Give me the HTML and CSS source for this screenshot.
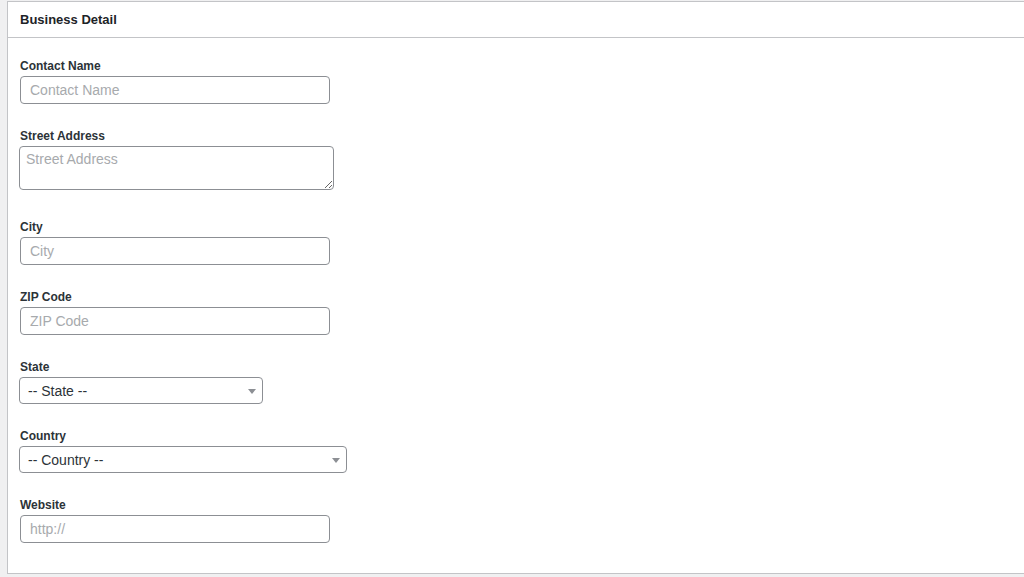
FILE: index.html
```html
<!DOCTYPE html>
<html lang="en">
<head>
    <meta charset="UTF-8">
    <meta name="viewport" content="width=device-width, initial-scale=1.0">
    <title>Business Detail</title>
    <link rel="stylesheet" href="styles.css">
</head>
<body>
    <div class="panel">
        <div class="panel-head">Business Detail</div>
        <form class="panel-body" action="#" method="post">
            <div class="field">
                <label for="contact">Contact Name</label>
                <input type="text" id="contact" class="text-input" placeholder="Contact Name">
            </div>
            <div class="field field-area">
                <label for="street">Street Address</label>
                <textarea id="street" class="area-input" placeholder="Street Address"></textarea>
            </div>
            <div class="field">
                <label for="city">City</label>
                <input type="text" id="city" class="text-input" placeholder="City">
            </div>
            <div class="field">
                <label for="zip">ZIP Code</label>
                <input type="text" id="zip" class="text-input" placeholder="ZIP Code">
            </div>
            <div class="field">
                <label for="state">State</label>
                <div class="select-wrap state-wrap">
                    <select id="state">
                        <option>-- State --</option>
                    </select>
                    <span class="caret"></span>
                </div>
            </div>
            <div class="field">
                <label for="country">Country</label>
                <div class="select-wrap country-wrap">
                    <select id="country">
                        <option>-- Country --</option>
                    </select>
                    <span class="caret"></span>
                </div>
            </div>
            <div class="field">
                <label for="website">Website</label>
                <input type="text" id="website" class="text-input" placeholder="http://">
            </div>
        </form>
    </div>
</body>
</html>
```

FILE: styles.css
```css
html, body {
    overflow: hidden;
}
body {
    font-family: "Liberation Sans", Arial, sans-serif;
    margin: 0;
    padding: 1px 0 0 7px;
    background-color: #f0f0f1;
    color: #1d2327;
}
.panel {
    background: #fff;
    border: 1px solid #c3c4c7;
    border-right: 0;
}
.panel-head {
    height: 35px;
    line-height: 35px;
    padding: 0 12px;
    font-size: 13px;
    font-weight: bold;
    border-bottom: 1px solid #c3c4c7;
}
.panel-body {
    padding: 20px 12px 6px;
}
.field {
    margin-bottom: 24px;
}
.field-area {
    margin-bottom: 29px;
}
.field label {
    display: block;
    font-size: 12px;
    font-weight: bold;
    line-height: 16px;
    margin-bottom: 2px;
    color: #2c3338;
}
.text-input, .area-input, select {
    display: block;
    box-sizing: border-box;
    font-family: "Liberation Sans", Arial, sans-serif;
    font-size: 14px;
    color: #2c3338;
    border: 1px solid #8c8f94;
    border-radius: 4px;
    background: #fff;
    margin: 0;
    outline: none;
}
.text-input {
    width: 310px;
    height: 28px;
    padding: 0 9px;
}
.area-input {
    width: 315px;
    height: 44px;
    margin-left: -1px;
    padding: 4px 6px;
    resize: vertical;
}
::placeholder {
    color: #a7aaad;
}
.select-wrap {
    position: relative;
    margin-left: -1px;
}
.state-wrap {
    width: 244px;
}
.country-wrap {
    width: 328px;
}
select {
    width: 100%;
    height: 27px;
    padding: 0 24px 0 8px;
    appearance: none;
    -webkit-appearance: none;
}
.caret {
    position: absolute;
    right: 7px;
    top: 12px;
    border-left: 4px solid transparent;
    border-right: 4px solid transparent;
    border-top: 5px solid #8c8f94;
    pointer-events: none;
}
```
